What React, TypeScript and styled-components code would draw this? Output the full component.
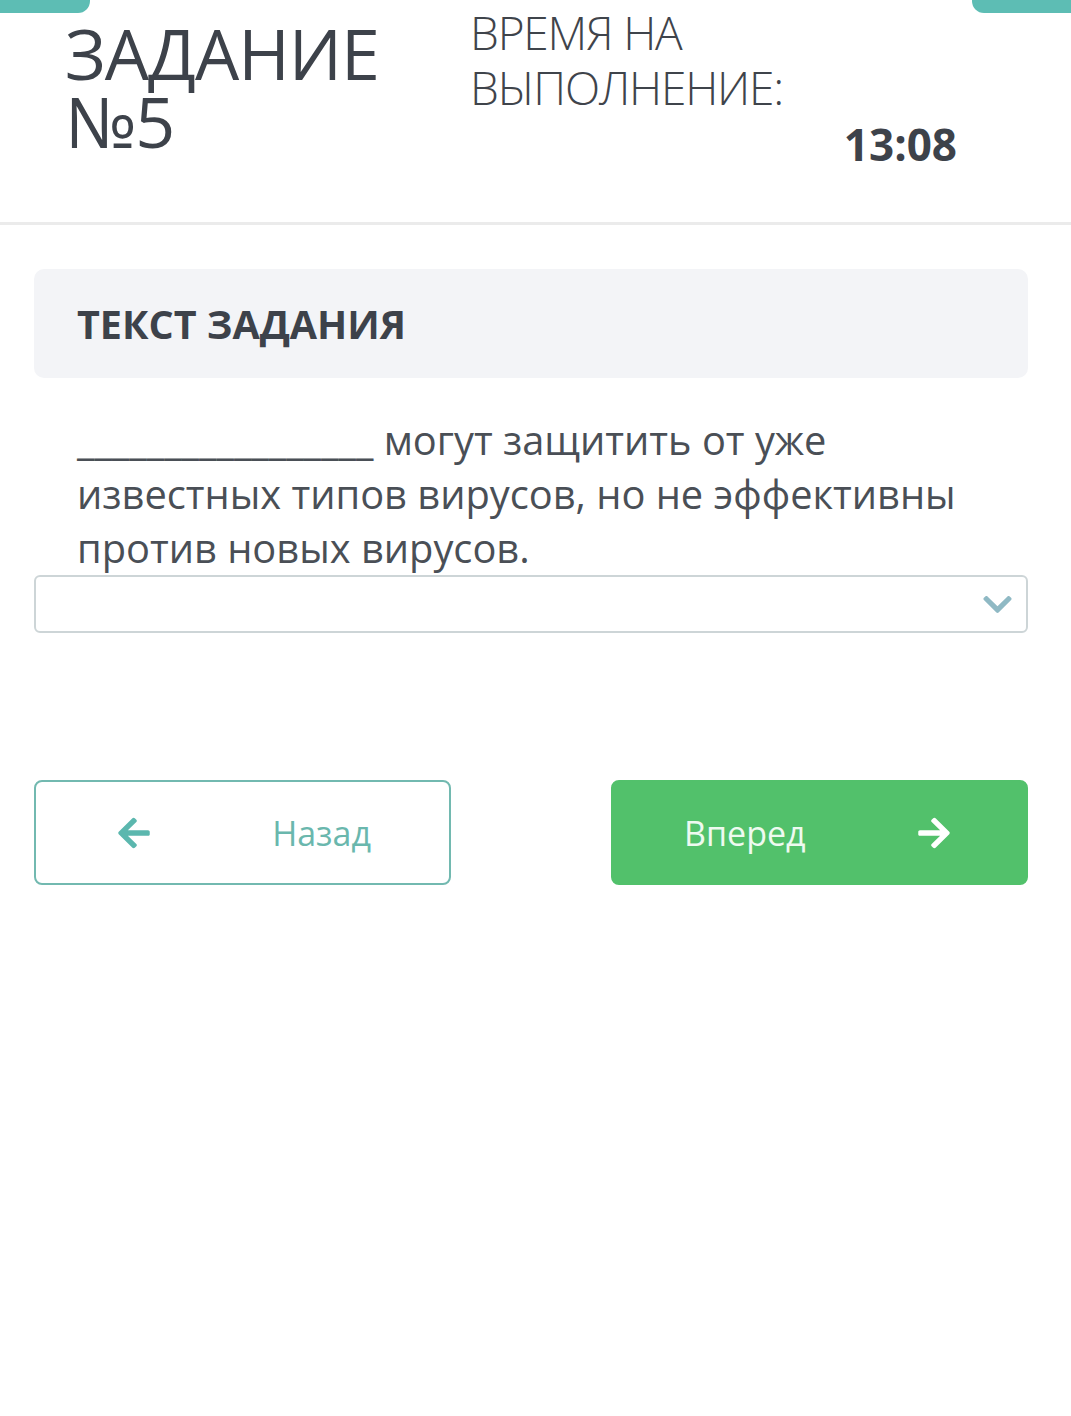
import React from 'react';
import styled, { createGlobalStyle } from 'styled-components';
import { FaArrowLeft, FaArrowRight, FaChevronDown } from 'react-icons/fa';

const GlobalStyle = createGlobalStyle`
  html, body {
    margin: 0;
    padding: 0;
    background: #ffffff;
  }
  body {
    font-family: "Open Sans", "Noto Sans", sans-serif;
    color: #3f444b;
  }
`;

const Page = styled.div`
  width: 1071px;
  min-height: 1416px;
  background: #ffffff;
`;

const TopTabs = styled.div`
  display: flex;
  justify-content: space-between;
  height: 0;
`;

const Tab = styled.div<{ $side: 'left' | 'right' }>`
  width: ${(p) => (p.$side === 'left' ? '90px' : '99px')};
  height: 13px;
  background: #5dbdb4;
  border-radius: ${(p) => (p.$side === 'left' ? '0 0 12px 0' : '0 0 0 12px')};
`;

const Header = styled.header`
  display: flex;
  height: 222px;
  border-bottom: 3px solid #ebebeb;
  padding: 0 0 0 65px;
  box-sizing: content-box;
`;

const Title = styled.h1`
  margin: 0;
  padding-top: 19px;
  width: 405px;
  font-size: 70px;
  line-height: 68px;
  font-weight: 400;
  letter-spacing: -1px;
  color: #3d424a;
`;

const TimeBlock = styled.div`
  display: flex;
  flex-direction: column;
  width: 487px;
  padding-top: 5px;
`;

const TimeLabel = styled.div`
  font-size: 46px;
  line-height: 55px;
  font-weight: 300;
  color: #3f444b;
  letter-spacing: -1.2px;
`;

const TimeValue = styled.div`
  align-self: flex-end;
  margin-top: 2px;
  font-size: 44px;
  line-height: 55px;
  font-weight: 700;
  color: #3d424a;
`;

const Content = styled.main`
  display: flex;
  flex-direction: column;
  padding: 44px 43px 0 34px;
`;

const Card = styled.div`
  display: flex;
  align-items: center;
  height: 109px;
  padding: 0 43px;
  background: #f3f4f7;
  border-radius: 10px;
`;

const CardTitle = styled.h2`
  margin: 0;
  font-size: 39.5px;
  font-weight: 700;
  color: #3d424a;
`;

const Question = styled.p`
  margin: 35px 0 0;
  padding: 0 43px;
  font-size: 39.8px;
  line-height: 54px;
  color: #4a4f56;
`;

const Select = styled.div`
  display: flex;
  align-items: center;
  justify-content: flex-end;
  height: 54px;
  padding: 0 12px;
  border: 2px solid #cdd5d7;
  border-radius: 6px;
  color: #8fb9c4;
  font-size: 33px;
`;

const Buttons = styled.div`
  display: flex;
  justify-content: space-between;
  margin-top: 147px;
`;

const NavButton = styled.button<{ $primary?: boolean }>`
  display: flex;
  align-items: center;
  justify-content: space-between;
  width: 417px;
  height: 105px;
  box-sizing: border-box;
  padding: ${(p) => (p.$primary ? '0 74px 0 71px' : '0 78px 0 80px')};
  border-radius: 8px;
  border: 2px solid ${(p) => (p.$primary ? '#52c16b' : '#72b9b0')};
  background: ${(p) => (p.$primary ? '#52c16b' : '#ffffff')};
  color: ${(p) => (p.$primary ? '#eefaf0' : '#6ab7ad')};
  font-family: "Open Sans", "Noto Sans", sans-serif;
  font-size: 34px;
  cursor: pointer;

  svg {
    font-size: 36px;
    color: ${(p) => (p.$primary ? '#ffffff' : '#5bb7ae')};
  }
`;

export default function App() {
  return (
    <Page>
      <GlobalStyle />
      <TopTabs>
        <Tab $side="left" />
        <Tab $side="right" />
      </TopTabs>
      <Header>
        <Title>
          ЗАДАНИЕ
          <br />
          №5
        </Title>
        <TimeBlock>
          <TimeLabel>
            ВРЕМЯ НА
            <br />
            ВЫПОЛНЕНИЕ:
          </TimeLabel>
          <TimeValue>13:08</TimeValue>
        </TimeBlock>
      </Header>
      <Content>
        <Card>
          <CardTitle>ТЕКСТ ЗАДАНИЯ</CardTitle>
        </Card>
        <Question>
          _________________ могут защитить от уже известных типов вирусов, но не эффективны против
          новых вирусов.
        </Question>
        <Select>
          <FaChevronDown />
        </Select>
        <Buttons>
          <NavButton>
            <FaArrowLeft />
            <span>Назад</span>
          </NavButton>
          <NavButton $primary>
            <span>Вперед</span>
            <FaArrowRight />
          </NavButton>
        </Buttons>
      </Content>
    </Page>
  );
}
